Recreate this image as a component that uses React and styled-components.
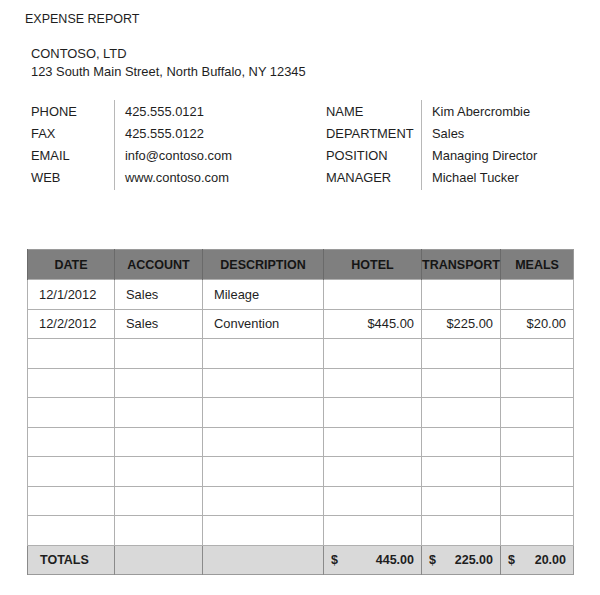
import styled, { createGlobalStyle } from "styled-components";

const GlobalStyle = createGlobalStyle`
  body {
    margin: 0;
    background: #ffffff;
    font-family: "Liberation Sans", Arial, sans-serif;
    color: #1e1e1e;
  }
`;

const contactInfo = [
  ["PHONE", "425.555.0121"],
  ["FAX", "425.555.0122"],
  ["EMAIL", "info@contoso.com"],
  ["WEB", "www.contoso.com"],
];

const employeeInfo = [
  ["NAME", "Kim Abercrombie"],
  ["DEPARTMENT", "Sales"],
  ["POSITION", "Managing Director"],
  ["MANAGER", "Michael Tucker"],
];

const columns = [
  { title: "DATE", width: 87 },
  { title: "ACCOUNT", width: 88 },
  { title: "DESCRIPTION", width: 121 },
  { title: "HOTEL", width: 98, money: true },
  { title: "TRANSPORT", width: 79, money: true },
  { title: "MEALS", width: 73, money: true },
];

const expenses = [
  ["12/1/2012", "Sales", "Mileage", "", "", ""],
  ["12/2/2012", "Sales", "Convention", "$445.00", "$225.00", "$20.00"],
  ["", "", "", "", "", ""],
  ["", "", "", "", "", ""],
  ["", "", "", "", "", ""],
  ["", "", "", "", "", ""],
  ["", "", "", "", "", ""],
  ["", "", "", "", "", ""],
  ["", "", "", "", "", ""],
];

const totals = ["445.00", "225.00", "20.00"];

function InfoBlock({ rows, labelWidth }) {
  return (
    <InfoGroup>
      <InfoLabels $width={labelWidth}>
        {rows.map(([label]) => (
          <InfoLine key={label}>{label}</InfoLine>
        ))}
      </InfoLabels>
      <InfoValues>
        {rows.map(([label, value]) => (
          <InfoLine key={label}>{value}</InfoLine>
        ))}
      </InfoValues>
    </InfoGroup>
  );
}

function App() {
  return (
    <Page>
      <GlobalStyle />
      <Heading>EXPENSE REPORT</Heading>
      <Company>
        <div>CONTOSO, LTD</div>
        <div>123 South Main Street, North Buffalo, NY 12345</div>
      </Company>
      <InfoRow>
        <InfoBlock rows={contactInfo} labelWidth={83} />
        <InfoBlock rows={employeeInfo} labelWidth={95} />
      </InfoRow>

      <Table>
        <colgroup>
          {columns.map((c) => (
            <col key={c.title} style={{ width: c.width }} />
          ))}
        </colgroup>
        <thead>
          <tr>
            {columns.map((c) => (
              <HeadCell key={c.title}>{c.title}</HeadCell>
            ))}
          </tr>
        </thead>
        <tbody>
          {expenses.map((row, i) => (
            <tr key={i}>
              {row.map((cell, j) => (
                <Cell key={j} $money={columns[j].money}>
                  {cell}
                </Cell>
              ))}
            </tr>
          ))}
          <tr>
            <TotalCell>TOTALS</TotalCell>
            <TotalCell />
            <TotalCell />
            {totals.map((t) => (
              <TotalCell key={t} $money>
                <Amount>
                  <span>$</span>
                  <span>{t}</span>
                </Amount>
              </TotalCell>
            ))}
          </tr>
        </tbody>
      </Table>
    </Page>
  );
}

const Page = styled.div`
  width: 600px;
  height: 595px;
  box-sizing: border-box;
  padding: 11px 0 0 27px;
  font-size: 12.9px;
`;

const Heading = styled.div`
  margin-left: -2px;
  font-size: 12.5px;
  line-height: 16px;
`;

const Company = styled.div`
  margin: 18px 0 0 4px;
  line-height: 18px;
`;

const InfoRow = styled.div`
  display: flex;
  margin: 19px 0 0 4px;
`;

const InfoGroup = styled.div`
  display: flex;
  flex-shrink: 0;
  width: 295px;
`;

const InfoLabels = styled.div`
  display: flex;
  flex-direction: column;
  width: ${(p) => p.$width}px;
  padding: 1px 0;
`;

const InfoValues = styled.div`
  display: flex;
  flex-direction: column;
  border-left: 1px solid #b8b8b8;
  padding: 1px 0 1px 10px;
`;

const InfoLine = styled.div`
  height: 22px;
  line-height: 22px;
  white-space: nowrap;
`;

const Table = styled.table`
  margin-top: 59px;
  width: 546px;
  border-collapse: collapse;
  table-layout: fixed;
  border: 1px solid #9a9a9a;
  font-size: 12.9px;
`;

const HeadCell = styled.th`
  height: 29px;
  padding: 0;
  background: #7f7f7f;
  border-left: 1px solid #6a6a6a;
  color: #151515;
  font-size: 12.5px;
  font-weight: bold;
  text-align: center;
  white-space: nowrap;
  overflow: visible;
`;

const Cell = styled.td`
  height: 28.5px;
  padding: 0 ${(p) => (p.$money ? "7px" : "11px")};
  border: 1px solid #b0b0b0;
  text-align: ${(p) => (p.$money ? "right" : "left")};
  white-space: nowrap;
`;

const TotalCell = styled.td`
  height: 28px;
  padding: 0 7px 0 ${(p) => (p.$money ? "7px" : "12px")};
  background: #d9d9d9;
  border-left: 1px solid #8a8a8a;
  border-top: 1px solid #a0a0a0;
  font-weight: bold;
  font-size: 12.5px;
`;

const Amount = styled.div`
  display: flex;
  justify-content: space-between;
`;

export default App;
